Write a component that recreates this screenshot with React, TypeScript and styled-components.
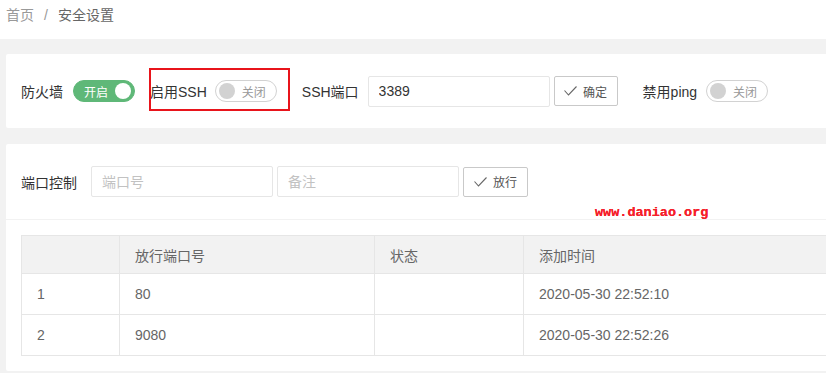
import styled, { createGlobalStyle } from "styled-components";

const GlobalStyle = createGlobalStyle`
    html, body {
        margin: 0;
        padding: 0;
        background: #f2f2f2;
        overflow: hidden;
    }
    body {
        font-family: "Liberation Sans", "Noto Sans CJK SC", sans-serif;
        font-size: 14px;
        color: #333;
    }
`;

const Breadcrumb = styled.div`
    height: 39px;
    background: #fff;
    display: flex;
    align-items: flex-start;
    gap: 10px;
    padding-left: 6px;
    line-height: 30px;
    color: #999;
`;

const Crumb = styled.span<{ $current?: boolean }>`
    color: ${(p) => (p.$current ? "#666" : "#999")};
`;

const Page = styled.main`
    padding: 15px 0 0 6px;
    width: 840px;
    display: flex;
    flex-direction: column;
    gap: 16px;
`;

const Card = styled.section`
    position: relative;
    background: #fff;
    border-radius: 2px;
`;

const Row = styled.div<{ $height: number }>`
    height: ${(p) => p.$height}px;
    display: flex;
    align-items: center;
    padding: 0 15px;
`;

const Field = styled.div<{ $ml?: number; $gap?: number }>`
    position: relative;
    display: flex;
    align-items: center;
    gap: ${(p) => p.$gap ?? 10}px;
    margin-left: ${(p) => p.$ml ?? 0}px;
`;

const Highlight = styled(Field)`
    &::after {
        content: "";
        position: absolute;
        left: -1px;
        top: -12px;
        width: 137px;
        height: 39px;
        border: 2px solid #e8141b;
        pointer-events: none;
    }
`;

const Label = styled.span`
    color: #333;
    white-space: nowrap;
`;

const SwitchBox = styled.div<{ $on: boolean }>`
    box-sizing: border-box;
    width: 62px;
    height: 22px;
    border-radius: 20px;
    display: flex;
    align-items: center;
    flex-direction: ${(p) => (p.$on ? "row" : "row-reverse")};
    justify-content: space-between;
    padding: ${(p) => (p.$on ? "0 3px 0 10px" : "0 10px 0 3px")};
    border: 1px solid ${(p) => (p.$on ? "#5FB878" : "#d2d2d2")};
    background: ${(p) => (p.$on ? "#5FB878" : "#fff")};
    color: ${(p) => (p.$on ? "#fff" : "#999")};
    font-size: 12px;
`;

const Knob = styled.i<{ $on: boolean }>`
    width: 16px;
    height: 16px;
    border-radius: 50%;
    background: ${(p) => (p.$on ? "#fff" : "#d2d2d2")};
`;

const Switch = ({ on, text }: { on: boolean; text: string }) => (
    <SwitchBox $on={on}>
        <span>{text}</span>
        <Knob $on={on} />
    </SwitchBox>
);

const Input = styled.input`
    box-sizing: border-box;
    width: 182px;
    height: 31px;
    border: 1px solid #e6e6e6;
    border-radius: 2px;
    padding: 0 10px;
    font-family: inherit;
    font-size: 14px;
    color: #333;
    outline: none;

    &::placeholder {
        color: #c2c2c2;
    }
`;

const Button = styled.button<{ $w: number }>`
    box-sizing: border-box;
    width: ${(p) => p.$w}px;
    height: 30px;
    display: flex;
    align-items: center;
    justify-content: center;
    gap: 6px;
    background: #fff;
    border: 1px solid #c9c9c9;
    border-radius: 2px;
    font-family: inherit;
    font-size: 12px;
    color: #555;
    padding: 0;
`;

const Check = () => (
    <svg width="13" height="10" viewBox="0 0 13 10">
        <polyline points="0.5,4.5 4.5,9 12.5,0.5" fill="none" stroke="#666" strokeWidth="1.1" />
    </svg>
);

const Divider = styled.div`
    height: 1px;
    background: #f2f2f2;
`;

const Watermark = styled.span`
    position: absolute;
    left: 589px;
    top: 61px;
    font-family: "Liberation Mono", monospace;
    font-weight: bold;
    font-size: 13.5px;
    line-height: 16px;
    color: #f5202a;
    text-shadow: 0 0 0.4px #f5202a;
`;

const TableWrap = styled.div`
    padding: 15px 0 15px 15px;
`;

const Table = styled.table`
    width: 830px;
    border-collapse: collapse;
    color: #666;
`;

const Th = styled.th<{ $w?: number }>`
    width: ${(p) => (p.$w ? `${p.$w}px` : "auto")};
    height: 38px;
    background: #f2f2f2;
    border: 1px solid #e6e6e6;
    font-weight: normal;
    text-align: left;
    padding: 0 15px;
    box-sizing: border-box;
`;

const Td = styled.td`
    height: 40px;
    border: 1px solid #e6e6e6;
    padding: 0 15px;
`;

const rules = [
    { id: 1, port: "80", status: "", time: "2020-05-30 22:52:10" },
    { id: 2, port: "9080", status: "", time: "2020-05-30 22:52:26" },
];

const App = () => (
    <>
        <GlobalStyle />
        <Breadcrumb>
            <Crumb>首页</Crumb>
            <Crumb>/</Crumb>
            <Crumb $current>安全设置</Crumb>
        </Breadcrumb>
        <Page>
            <Card>
                <Row $height={74}>
                    <Field>
                        <Label>防火墙</Label>
                        <Switch on text="开启" />
                    </Field>
                    <Highlight $ml={15} $gap={8}>
                        <Label>启用SSH</Label>
                        <Switch on={false} text="关闭" />
                    </Highlight>
                    <Field $ml={25} $gap={9}>
                        <Label>SSH端口</Label>
                        <Field $gap={4}>
                            <Input defaultValue="3389" />
                            <Button $w={64}>
                                <Check />
                                确定
                            </Button>
                        </Field>
                    </Field>
                    <Field $ml={25} $gap={9}>
                        <Label>禁用ping</Label>
                        <Switch on={false} text="关闭" />
                    </Field>
                </Row>
            </Card>
            <Card>
                <Row $height={75}>
                    <Field $gap={14}>
                        <Label>端口控制</Label>
                        <Field $gap={4}>
                            <Input placeholder="端口号" />
                            <Input placeholder="备注" />
                            <Button $w={65}>
                                <Check />
                                放行
                            </Button>
                        </Field>
                    </Field>
                </Row>
                <Watermark>www.daniao.org</Watermark>
                <Divider />
                <TableWrap>
                    <Table>
                        <thead>
                            <tr>
                                <Th $w={98}></Th>
                                <Th $w={255}>放行端口号</Th>
                                <Th $w={149}>状态</Th>
                                <Th>添加时间</Th>
                            </tr>
                        </thead>
                        <tbody>
                            {rules.map((r) => (
                                <tr key={r.id}>
                                    <Td>{r.id}</Td>
                                    <Td>{r.port}</Td>
                                    <Td>{r.status}</Td>
                                    <Td>{r.time}</Td>
                                </tr>
                            ))}
                        </tbody>
                    </Table>
                </TableWrap>
            </Card>
        </Page>
    </>
);

export default App;
